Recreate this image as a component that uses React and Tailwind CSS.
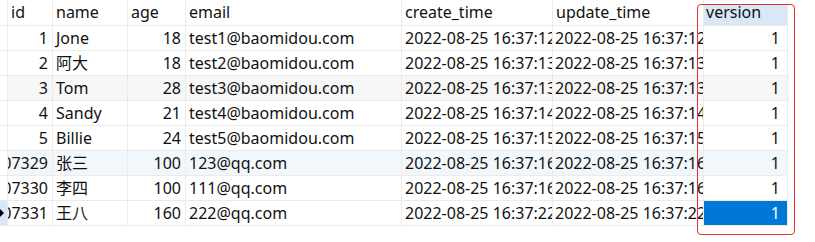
import React from "react";

const cols = "grid grid-cols-[8px_45px_75px_58px_216px_151px_151px_84px]";

const rows = [
  ["1", "Jone", "18", "test1@baomidou.com", "2022-08-25 16:37:12", "2022-08-25 16:37:12", "1"],
  ["2", "阿大", "18", "test2@baomidou.com", "2022-08-25 16:37:13", "2022-08-25 16:37:13", "1"],
  ["3", "Tom", "28", "test3@baomidou.com", "2022-08-25 16:37:13", "2022-08-25 16:37:13", "1"],
  ["4", "Sandy", "21", "test4@baomidou.com", "2022-08-25 16:37:14", "2022-08-25 16:37:14", "1"],
  ["5", "Billie", "24", "test5@baomidou.com", "2022-08-25 16:37:15", "2022-08-25 16:37:15", "1"],
  ["1562727413412507329", "张三", "100", "123@qq.com", "2022-08-25 16:37:16", "2022-08-25 16:37:16", "1"],
  ["1562727413412507330", "李四", "100", "111@qq.com", "2022-08-25 16:37:16", "2022-08-25 16:37:16", "1"],
  ["1562727413412507331", "王八", "160", "222@qq.com", "2022-08-25 16:37:22", "2022-08-25 16:37:22", "1"],
];

const rowBg = ["bg-white", "bg-white", "bg-[#f7f7f7]", "bg-white", "bg-white", "bg-[#f2f7fc]", "bg-white", "bg-white"];

const cell = "h-[25px] border-r border-b border-[#ebebeb] overflow-hidden whitespace-nowrap flex items-center";

export default function App() {
  return (
    <div
      className="relative w-[815px] h-[242px] bg-white text-[16px] text-[#111] leading-none"
      style={{ fontFamily: '"Noto Sans", "Noto Sans CJK SC", sans-serif' }}
    >
      <div className={cols}>
        <div className="h-[26px] border-r border-b border-[#ebebeb]" />
        {["id", "name", "age", "email", "create_time", "update_time"].map((h) => (
          <div key={h} className="h-[26px] border-r border-b border-[#ebebeb] flex items-end pb-[5px] pl-[3px] overflow-hidden whitespace-nowrap">
            {h}
          </div>
        ))}
        <div className="h-[26px] border-r border-b border-[#ebebeb] pt-[4px]">
          <div className="h-full bg-[#d9e8f6] flex items-end pb-[5px] pl-[2px]">version</div>
        </div>

        {rows.map((r, i) => {
          const last = i === rows.length - 1;
          const bg = rowBg[i];
          return (
            <React.Fragment key={i}>
              <div className={`${cell} ${last ? "bg-[#d9e8f6]" : "bg-white"}`}>
                {last && (
                  <svg width="6" height="10" viewBox="0 0 6 10" className="ml-[-1px]">
                    <path d="M0 0 L5 5 L0 10 Z" fill="#000" />
                  </svg>
                )}
              </div>
              <div className={`${cell} ${bg} justify-end pr-[4px]`}>{r[0]}</div>
              <div className={`${cell} ${bg} pl-[3px]`}>{r[1]}</div>
              <div className={`${cell} ${bg} justify-end pr-[4px]`}>{r[2]}</div>
              <div className={`${cell} ${bg} pl-[3px]`}>{r[3]}</div>
              <div className={`${cell} ${bg} pl-[3px]`}>{r[4]}</div>
              <div className={`${cell} ${bg} pl-[2px]`}>{r[5]}</div>
              <div className={`${cell} ${last ? "bg-[#0078d7] text-white" : bg} justify-end pr-[7px]`}>{r[6]}</div>
            </React.Fragment>
          );
        })}
      </div>

      <div className="absolute left-[697px] top-[4px] w-[98px] h-[231px] border border-[#e8312a] rounded-[4px] pointer-events-none" />
    </div>
  );
}
